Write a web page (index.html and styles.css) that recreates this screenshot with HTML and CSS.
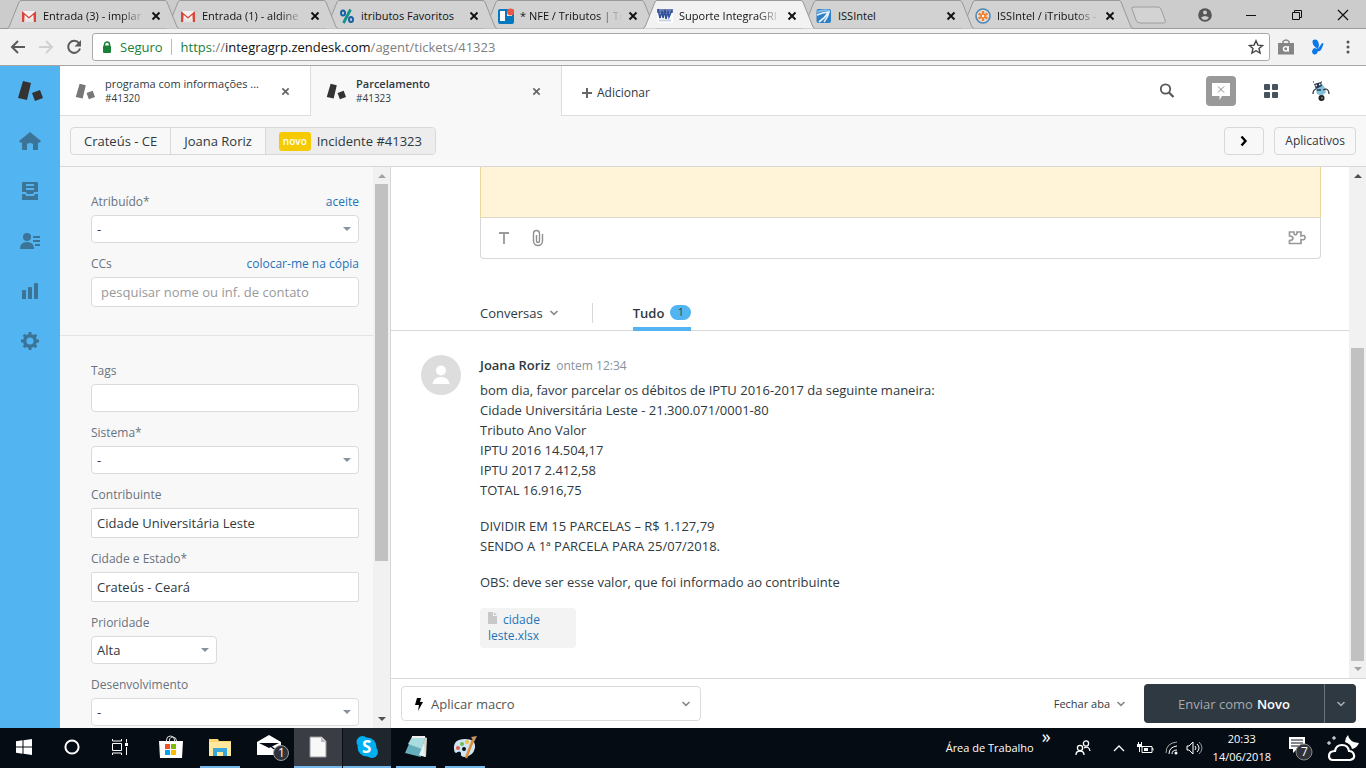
FILE: index.html
```html
<!DOCTYPE html>
<html lang="pt-BR">
<head>
<meta charset="utf-8">
<title>Suporte IntegraGRP</title>
<link rel="stylesheet" href="styles.css">
</head>
<body>
<svg class="defs" width="0" height="0" aria-hidden="true">
  <symbol id="tabshape" viewBox="0 0 172 29" preserveAspectRatio="none"><path d="M0 28.5 2 27 12 2q1-1.500 2-1.500H158q1 0 2 1.500L170 27l2 1.500"/></symbol>
  <symbol id="x" viewBox="0 0 10 10"><path d="M1.500 1.500l7 7m0-7l-7 7" fill="none" stroke="currentColor" stroke-width="1.900"/></symbol>
  <symbol id="gmail" viewBox="0 0 16 16"><path d="M1 3h14v11H1z" fill="#f2f2f2"/><path d="M1 14V3l7 6 7-6v11h-2.500V6.800L8 10.800 3.500 6.800V14z" fill="#d8443a"/><path d="M3.500 14v-4L8 12l4.500-2v4z" fill="#e3e3e3"/></symbol>
  <symbol id="ticket" viewBox="0 0 26 22"><path d="M6 1l8 2-4 17-9-2zM15 13l8-3 3 8-8 3z" fill="currentColor"/></symbol>
  <symbol id="chev" viewBox="0 0 10 6"><path d="M1.500 1l3.500 3.300L8.500 1" fill="none" stroke="currentColor" stroke-width="1.600"/></symbol>
</svg>

<header class="browser">
  <div class="strip">
    <nav class="btabs" aria-label="Abas do navegador">
      <div class="btab"><svg class="shape"><use href="#tabshape"/></svg><svg class="fav"><use href="#gmail"/></svg><span class="btitle">Entrada (3) - implar</span><button class="bclose" aria-label="Fechar"><svg width="10" height="10"><use href="#x"/></svg></button></div>
      <div class="btab"><svg class="shape"><use href="#tabshape"/></svg><svg class="fav"><use href="#gmail"/></svg><span class="btitle">Entrada (1) - aldine</span><button class="bclose" aria-label="Fechar"><svg width="10" height="10"><use href="#x"/></svg></button></div>
      <div class="btab"><svg class="shape"><use href="#tabshape"/></svg><svg class="fav" viewBox="0 0 16 16"><g fill="none" stroke-width="2"><ellipse cx="4" cy="5" rx="2" ry="2.600" stroke="#1660a8"/><ellipse cx="12" cy="11.500" rx="2" ry="2.600" stroke="#1660a8"/><path d="M11.500 1.500L4.500 15" stroke="#159188" stroke-width="2.800"/></g></svg><span class="btitle full">itributos Favoritos</span><button class="bclose" aria-label="Fechar"><svg width="10" height="10"><use href="#x"/></svg></button></div>
      <div class="btab"><svg class="shape"><use href="#tabshape"/></svg><svg class="fav" viewBox="0 0 16 16"><rect y="1" width="16" height="15" rx="2" fill="#0079bf"/><path d="M2 3h5v10H2zM9 3h5v5H9z" fill="#fff"/><circle cx="12.500" cy="4" r="3.500" fill="#eb5a46"/></svg><span class="btitle">* NFE / Tributos | Tr</span><button class="bclose" aria-label="Fechar"><svg width="10" height="10"><use href="#x"/></svg></button></div>
      <div class="btab current"><svg class="shape"><use href="#tabshape"/></svg><svg class="fav" viewBox="0 0 16 16"><path d="M0 1h16v14H0z" fill="#fff"/><path d="M0 1h16v4H0z" fill="#6f83b3"/><path d="M1 1l2 9 2-7 1 7 2-8 1 9 2-8 1 6 3-7" fill="none" stroke="#31539b" stroke-width="1.600"/><path d="M2 12.500h12" stroke="#c9d4e2" stroke-width="2"/></svg><span class="btitle">Suporte IntegraGRI</span><button class="bclose" aria-label="Fechar"><svg width="10" height="10"><use href="#x"/></svg></button></div>
      <div class="btab"><svg class="shape"><use href="#tabshape"/></svg><svg class="fav" viewBox="0 0 16 16"><rect x=".5" y="1" width="14.500" height="14" rx="2" fill="#2e7fc4"/><path d="M1 4q7-3 13-1" stroke="#83bce8" stroke-width="2" fill="none"/><path d="M1 7q5-2.500 12-3-1 5-5 10" stroke="#e9f4fc" stroke-width="1.500" fill="none"/><path d="M3 14q6-4 9-9" stroke="#e9f4fc" stroke-width="1.800" fill="none"/></svg><span class="btitle full">ISSIntel</span><button class="bclose" aria-label="Fechar"><svg width="10" height="10"><use href="#x"/></svg></button></div>
      <div class="btab"><svg class="shape"><use href="#tabshape"/></svg><svg class="fav" viewBox="0 0 16 16"><circle cx="8" cy="8" r="7" fill="#e8dfd6" stroke="#4c87b8" stroke-width="1.600"/><g stroke="#f08232" stroke-width="2.400"><path d="M8 3v10M3.500 5.500l9 5M12.500 5.500l-9 5"/></g><circle cx="8" cy="8" r="1.200" fill="#fff"/></svg><span class="btitle">ISSIntel / iTributos -</span><button class="bclose" aria-label="Fechar"><svg width="10" height="10"><use href="#x"/></svg></button></div>
    </nav>
    <button class="newtab" aria-label="Nova aba"><svg width="36" height="18"><path d="M4 1h24q2 0 3 2l4 11q1 3-1 3H10q-3 0-4-3L2 3Q1 1 4 1z" fill="#d3d3d3" stroke="#9e9e9e"/></svg></button>
    <div class="wincontrols">
      <button aria-label="Perfil"><svg width="14" height="14"><circle cx="7" cy="7" r="6.800" fill="#555"/><circle cx="7" cy="4.600" r="2" fill="#ccc"/><path d="M3 9.500q4-3 8 0-1.500 2.500-4 2.500t-4-2.500z" fill="#ccc"/></svg></button>
      <button aria-label="Minimizar"><svg width="12" height="12"><path d="M1 6.500h10" stroke="#111"/></svg></button>
      <button aria-label="Restaurar"><svg width="12" height="12"><path d="M1.500 3.500h7v7h-7zM3.500 3V1.500h7v7H9" fill="none" stroke="#111"/></svg></button>
      <button aria-label="Fechar janela"><svg width="12" height="12"><path d="M1 1l10 10m0-10L1 11" stroke="#111" stroke-width="1.200"/></svg></button>
    </div>
  </div>
  <div class="toolbar">
    <button class="tb" aria-label="Voltar"><svg width="16" height="16"><path d="M15 8H2.500M8 2L2 8l6 6" fill="none" stroke="#5b5b5b" stroke-width="2"/></svg></button>
    <button class="tb" aria-label="Avançar"><svg width="16" height="16"><path d="M1 8h12.500M8 2l6 6-6 6" fill="none" stroke="#d0d0d0" stroke-width="2"/></svg></button>
    <button class="tb" aria-label="Recarregar"><svg width="16" height="16"><path d="M13 4.200A6 6 0 1 0 14 9.500" fill="none" stroke="#5b5b5b" stroke-width="2"/><path d="M15 1v6.500H8.500z" fill="#5b5b5b"/></svg></button>
    <div class="address">
      <svg width="10" height="13"><path d="M2.500 5V3.500a2.500 2.500 0 0 1 5 0V5" fill="none" stroke="#188038" stroke-width="1.500"/><rect x="1" y="4.500" width="8" height="7.500" rx="1" fill="#188038"/></svg>
      <span class="secure">Seguro</span>
      <div class="url" role="textbox" aria-label="Endereço" contenteditable="true"><span class="scheme">https</span>://<b>integragrp.zendesk.com</b>/agent/tickets/41323</div>
      <button class="tb" aria-label="Favoritar"><svg width="16" height="16"><path d="M8 1.800l1.900 4.300 4.600.4-3.500 3 1.100 4.600L8 11.700l-4.100 2.400L5 9.500 1.500 6.500l4.600-.4z" fill="none" stroke="#444" stroke-width="1.400"/></svg></button>
    </div>
    <div class="extensions">
      <button class="tb" aria-label="Extensão de compras"><svg width="16" height="16"><path d="M0 4h16v11.500H0z" fill="#858585"/><path d="M5 5V2.500q3-3 6 0V5" fill="none" stroke="#858585" stroke-width="1.400"/><circle cx="7.700" cy="9.800" r="2.200" fill="none" stroke="#fff" stroke-width="1.400"/><path d="M10.200 7v5.800" stroke="#fff" stroke-width="1.400"/></svg></button>
      <button class="tb" aria-label="Extensão"><svg width="14" height="16"><path d="M7 10Q0 6 2 1q5-2 6 5l-1 4 4-6 1.500.500Q10 14 7 12q-1 4-4 3.500Q-1 13 3 9z" fill="#0a78e8"/></svg></button>
      <button class="tb" aria-label="Menu"><svg width="4" height="14"><g fill="#555"><circle cx="2" cy="2" r="1.500"/><circle cx="2" cy="7" r="1.500"/><circle cx="2" cy="12" r="1.500"/></g></svg></button>
    </div>
  </div>
</header>

<div class="app">
  <nav class="rail" aria-label="Principal">
    <a href="#" class="logo" aria-label="Início do suporte"><svg width="26" height="22"><use href="#ticket"/></svg></a>
    <a href="#" aria-label="Início"><svg width="22" height="18"><path d="M11 0l11 9-1 1.500h-2V18h-5v-6q-3-2-6 0v6H3v-7.500H1L0 9z" fill="currentColor"/></svg></a>
    <a href="#" aria-label="Visualizações"><svg width="16" height="18"><path d="M0 1q0-1 1-1h14q1 0 1 1v9h-4l-1 2H5l-1-2H0zM0 12h3l1 2h8l1-2h3v6H0z" fill="currentColor"/><path d="M4 3h8M4 7h8" stroke="#52b5f1" stroke-width="2"/></svg></a>
    <a href="#" aria-label="Clientes"><svg width="20" height="16"><circle cx="7" cy="4" r="4" fill="currentColor"/><path d="M0 16q0-7 7-7t7 7z" fill="currentColor"/><path d="M13 4h7M13 8h7M15 12h5" stroke="currentColor" stroke-width="2"/></svg></a>
    <a href="#" aria-label="Relatórios"><svg width="16" height="16"><path d="M0 8q0-1 1-1h2q1 0 1 1v8H0zM6 5q0-1 1-1h2q1 0 1 1v11H6zM12 1q0-1 1-1h2q1 0 1 1v15h-4z" fill="currentColor"/></svg></a>
    <a href="#" aria-label="Administrador"><svg width="18" height="18"><circle cx="9" cy="9" r="5.300" fill="none" stroke="currentColor" stroke-width="3.400"/><path d="M9 0v3M9 15v3M0 9h3M15 9h3M2.700 2.700l2 2M13.300 13.300l2 2M2.700 15.300l2-2M13.300 4.700l2-2" stroke="currentColor" stroke-width="3"/></svg></a>
  </nav>

  <div class="workspace">
    <header class="tabs">
      <div class="tab muted"><svg class="ticon" width="20" height="17"><use href="#ticket"/></svg><a href="#"><span class="name">programa com informações ...</span><span>#41320</span></a><button aria-label="Fechar ticket"><svg width="9" height="9"><use href="#x"/></svg></button></div>
      <div class="tab selected"><svg class="ticon" width="20" height="17"><use href="#ticket"/></svg><a href="#"><strong class="name">Parcelamento</strong><span>#41323</span></a><button aria-label="Fechar ticket"><svg width="9" height="9"><use href="#x"/></svg></button></div>
      <button class="add"><svg width="10" height="10"><path d="M5 0v10M0 5h10" stroke="#666" stroke-width="2"/></svg>Adicionar</button>
      <div class="tools">
        <button aria-label="Pesquisar"><svg width="16" height="16"><circle cx="6.500" cy="6" r="4.700" fill="none" stroke="#555" stroke-width="1.800"/><path d="M10 9.500l4.500 4.500" stroke="#555" stroke-width="2.200"/></svg></button>
        <button class="chat" aria-label="Chat"><svg width="18" height="18"><path d="M0 1h18v13h-8l-2.500 4V14H0z" fill="#fff"/><path d="M6 4.500l6 6m0-6l-6 6" stroke="#888"/></svg></button>
        <button aria-label="Produtos"><svg width="14" height="14"><g fill="#46525e"><rect width="6" height="6" rx="1"/><rect x="8" width="6" height="6" rx="1"/><rect y="8" width="6" height="6" rx="1"/><rect x="8" y="8" width="6" height="6" rx="1"/></g></svg></button>
        <button aria-label="Perfil do agente"><svg width="18" height="20"><path d="M3 6l7-3 3 4 1 4-4 4-5-2z" fill="#86bfdb"/><path d="M2 3l7-2 1 4-6 3z" fill="#26394a"/><path d="M5 9l4 0" stroke="#26394a" stroke-width="1.500"/><path d="M3.500 4.500h1.500M7 3.500h1.500" stroke="#fff" stroke-width="1.500"/><path d="M11 9l3-1q3 1 3 5M4 8q-3 1-3 5" fill="none" stroke="#333" stroke-width="1.300"/><path d="M1 1h1M9 1h1" stroke="#d2713a" stroke-width="2"/><circle cx="9.500" cy="17" r="3" fill="#222"/><circle cx="10" cy="17" r="1" fill="#888"/></svg></button>
      </div>
    </header>

    <div class="subheader">
      <nav class="crumbs" aria-label="Navegação"><a href="#">Crateús - CE</a><a href="#">Joana Roriz</a><a href="#" class="here"><span class="badge">novo</span>Incidente #41323</a></nav>
      <div class="subactions">
        <button class="outline next" aria-label="Próximo ticket"><svg width="8" height="12"><path d="M1.500 1.500L5.500 6l-4 4.500" fill="none" stroke="#000" stroke-width="2.400"/></svg></button>
        <button class="outline apps">Aplicativos</button>
      </div>
    </div>

    <div class="content">
      <aside class="side">
        <form class="fields">
          <section class="group">
            <div class="field"><div class="labelrow"><label for="assignee">Atribuído*</label><a href="#">aceite</a></div><div class="pick"><select id="assignee"><option>-</option></select><i></i></div></div>
            <div class="field"><div class="labelrow"><label for="cc">CCs</label><a href="#">colocar-me na cópia</a></div><input id="cc" class="tall soft" type="text" placeholder="pesquisar nome ou inf. de contato"></div>
          </section>
          <section class="group">
            <div class="field"><div class="labelrow"><label for="tags">Tags</label></div><input id="tags" type="text"></div>
            <div class="field"><div class="labelrow"><label for="system">Sistema*</label></div><div class="pick"><select id="system"><option>-</option></select><i></i></div></div>
            <div class="field"><div class="labelrow"><label for="payer">Contribuinte</label></div><input id="payer" class="tall" type="text" value="Cidade Universitária Leste"></div>
            <div class="field"><div class="labelrow"><label for="city">Cidade e Estado*</label></div><input id="city" class="tall" type="text" value="Crateús - Ceará"></div>
            <div class="field"><div class="labelrow"><label for="priority">Prioridade</label></div><div class="pick short"><select id="priority"><option>Alta</option></select><i></i></div></div>
            <div class="field"><div class="labelrow"><label for="dev">Desenvolvimento</label></div><div class="pick"><select id="dev"><option>-</option></select><i></i></div></div>
          </section>
        </form>
        <div class="bar sidebar-bar"><i class="up dim"></i><div class="thumb"></div><i class="down"></i></div>
      </aside>

      <main class="main">
        <div class="scroller">
          <div class="thread">
            <div class="composer">
              <textarea class="note" aria-label="Nota interna"></textarea>
              <div class="tools-row">
                <button aria-label="Formatação"><svg width="12" height="14"><path d="M1 2h10M6 2v11" stroke="#999" stroke-width="1.800"/></svg></button>
                <button aria-label="Anexar"><svg width="12" height="18"><path d="M4.500 6v6a1.500 1.500 0 0 0 3 0V4.500a2.800 2.800 0 0 0-6 0V12a4.500 4.500 0 0 0 9 0V5" fill="none" stroke="#8f8f8f" stroke-width="1.400"/></svg></button>
                <button class="puzzle" aria-label="Aplicativos"><svg width="18" height="16"><path d="M1.500 2H6v1.500q1 3 3 0V2h4v4q4-1.500 4 1.500t-4 2v4H1.500v-3q3.500 0 3.500-2.200T1.500 6z" fill="none" stroke="#999" stroke-width="1.700"/></svg></button>
              </div>
            </div>
            <nav class="filters" aria-label="Conversas">
              <button class="filter">Conversas<svg width="10" height="6"><use href="#chev"/></svg></button>
              <button class="filter all">Tudo<span class="count">1</span></button>
            </nav>
            <article class="comment">
              <svg class="avatar" width="40" height="40"><circle cx="20" cy="20" r="20" fill="#ddd"/><circle cx="20" cy="15.500" r="5" fill="#fff"/><path d="M11.500 29q1-7 8.500-7t8.500 7z" fill="#fff"/></svg>
              <div class="text">
                <div class="who"><strong>Joana Roriz</strong><time>ontem 12:34</time></div>
                <p>bom dia, favor parcelar os débitos de IPTU 2016-2017 da seguinte maneira:<br>Cidade Universitária Leste - 21.300.071/0001-80<br>Tributo Ano Valor<br>IPTU 2016 14.504,17<br>IPTU 2017 2.412,58<br>TOTAL 16.916,75</p>
                <p>DIVIDIR EM 15 PARCELAS – R$ 1.127,79<br>SENDO A 1ª PARCELA PARA 25/07/2018.</p>
                <p>OBS: deve ser esse valor, que foi informado ao contribuinte</p>
                <a href="#" class="file"><svg width="9" height="12"><path d="M0 0h5v4h4v8H0zM6 0l3 3H6z" fill="#c8c8c8"/></svg>cidade leste.xlsx</a>
              </div>
            </article>
          </div>
          <div class="bar main-bar"><i class="up"></i><div class="thumb"></div><i class="down dim"></i></div>
        </div>
        <footer class="footer">
          <button class="macro"><svg width="8" height="14"><path d="M2 1h4L5 5h3L3 14l1-6H0z" fill="#000"/></svg><span>Aplicar macro</span><svg class="end" width="10" height="6"><use href="#chev"/></svg></button>
          <button class="closetab">Fechar aba<svg width="10" height="6"><use href="#chev"/></svg></button>
          <div class="submit"><button class="send">Enviar como <strong>Novo</strong></button><button class="more" aria-label="Mais opções"><svg width="10" height="6"><use href="#chev"/></svg></button></div>
        </footer>
      </main>
    </div>
  </div>
</div>

<footer class="taskbar">
  <button aria-label="Iniciar"><svg width="16" height="16"><path d="M0 2.300L6.500 1.300V7.500H0zM7.500 1.200L16 0v7.500H7.500zM0 8.500h6.500v6.200L0 13.700zM7.500 8.500H16V16l-8.500-1.200z" fill="#fff"/></svg></button>
  <button aria-label="Cortana"><svg width="16" height="16"><circle cx="8" cy="8" r="6.600" fill="none" stroke="#fff" stroke-width="2"/></svg></button>
  <button aria-label="Visão de tarefas"><svg width="18" height="16"><path d="M1.500 4.500h9v7h-9zM1.500 0v2h9V0M1.500 16v-2h9v2M15.500 0v3.500M15.500 8v8" fill="none" stroke="#fff"/><path d="M14 4h3v3h-3z" fill="#fff"/></svg></button>
  <button class="store" aria-label="Microsoft Store"><svg width="24" height="24"><path d="M0 6h24l-1 17H1z" fill="#fff"/><path d="M7.500 7V5q0-4 4-4t4 4v2M10.500 7V4q1-2 3-2 4 0 4 4" fill="none" stroke="#ddd"/><path d="M6 9h5v5H6z" fill="#f25022"/><path d="M12 9h5v5h-5z" fill="#7fba00"/><path d="M6 15h5v5H6z" fill="#00a4ef"/><path d="M12 15h5v5h-5z" fill="#ffb900"/></svg></button>
  <button class="running" aria-label="Explorador"><svg width="22" height="19"><path d="M0 1h9l1 2h12v15H0z" fill="#f8d775"/><path d="M0 4h22v14H0z" fill="#ffe79b"/><path d="M4 18v-8h14v8h-4v-4H8v4z" fill="#3aa5dc"/></svg></button>
  <button class="mail" aria-label="Email"><svg width="36" height="28"><path d="M2 9l12-7 12 7v13H2z" fill="#fff"/><path d="M4 10h20l-10 5z" fill="#070c14"/><path d="M14 12l12 9" stroke="#070c14" stroke-width="1.500"/><circle cx="26" cy="20" r="7.500" fill="#30343a" stroke="#999"/><text x="23" y="24" font-size="12" fill="#fff">1</text></svg></button>
  <button class="running focused" aria-label="Documento"><svg width="18" height="22"><path d="M1 1h12l4 4v16H1z" fill="#f8f8f8" stroke="#999"/><path d="M12 1v5h5z" fill="#bbb"/></svg></button>
  <button class="running lit" aria-label="Skype"><svg width="22" height="22"><circle cx="11" cy="11" r="9.500" fill="#00aff0"/><circle cx="6.500" cy="6" r="6" fill="#00aff0"/><circle cx="16" cy="16" r="6" fill="#00aff0"/><text x="6" y="17" font-size="17" font-weight="bold" fill="#fff">S</text></svg></button>
  <button class="running" aria-label="Bloco de notas"><svg width="24" height="24"><path d="M20 2l3 1-1 19-7-3z" fill="#d8d4c6"/><path d="M8 2h13l-4 20-16-4z" fill="#64aebb"/><path d="M8 2h13l-3 12-14-5z" fill="#a9dce1"/><path d="M8 2h13" stroke="#eee" stroke-width="2"/><path d="M20 8l1 14-6-2z" fill="#e8f2f2"/></svg></button>
  <button class="running" aria-label="Paint"><svg width="26" height="24"><path d="M2 14Q1 4 13 4q11 0 10 9-2 8-10 9-5 0-4-4-1-3-5 0-2-1-2-4z" fill="#cfe5f4"/><circle cx="6" cy="13" r="2" fill="#e35c50"/><circle cx="10" cy="9" r="2" fill="#6dbb55"/><circle cx="15" cy="7" r="2" fill="#f4c13b"/><circle cx="12" cy="14" r="2" fill="#08101a"/><path d="M21 5l-7 18" stroke="#e08a33" stroke-width="2.500"/><path d="M19 2l6-1-3 6z" fill="#c89567"/></svg></button>
  <div class="tray">
    <span class="desk">Área de Trabalho</span><span class="dbl">»</span>
    <svg class="people" width="16" height="16"><g fill="none" stroke="#fff" stroke-width="1.300"><circle cx="5" cy="8" r="2.600"/><path d="M1 15q0-4 4-4t4 4"/><circle cx="11" cy="3.500" r="2.600"/><path d="M9 8q5-2.500 6 3"/></g></svg>
    <svg class="caret" width="12" height="8"><path d="M1 7l5-5 5 5" fill="none" stroke="#fff" stroke-width="1.300"/></svg>
    <svg class="battery" width="17" height="13"><path d="M5 4.500h10v6H5zM15 6.500h1v2" fill="none" stroke="#fff"/><path d="M7 6h4v3H7zM0 2h5v3H3v5H2V5H0zM1 0h1v2H1zM4 0h1v2H4z" fill="#fff"/></svg>
    <svg class="wifi" width="13" height="14"><g fill="none" stroke="#aaa"><path d="M1 12Q1 2 12 1"/><path d="M4 13q0-7 8-8" stroke="#fff"/><path d="M7 13q0-4 5-4" stroke="#fff"/></g><circle cx="11" cy="12" r="1.500" fill="#fff"/></svg>
    <svg class="volume" width="17" height="14"><path d="M1 5h2l4-4v12L3 9H1z" fill="none" stroke="#fff"/><path d="M9 5q2 2 0 4M11 3q4 4 0 8" fill="none" stroke="#fff"/><path d="M13 1q6 6 0 12" fill="none" stroke="#999"/></svg>
    <time class="clock">20:33<br>14/06/2018</time>
    <svg class="notice" width="26" height="26"><path d="M1 2h16v12H9l-4 4v-4H1z" fill="#fff"/><path d="M3 5h12M3 8h12M3 11h8" stroke="#0b1119"/><circle cx="16" cy="17" r="8" fill="#30343a" stroke="#888"/><text x="13" y="21" font-size="12" fill="#fff">7</text></svg>
    <svg class="weather" width="34" height="30"><path d="M7 27h17q5-1 4-5-1-4-5-4-1-6-7-6t-7 6q-6 0-6 5 0 4 4 4z" fill="none" stroke="#fff" stroke-width="2.200"/><path d="M22 2q1 7 11 8-2 5-7 6-1-5-7-7 0-4 3-7z" fill="#fff"/><path d="M8 3v4M6 5h4M3 8v4M1 10h4" stroke="#fff"/></svg>
  </div>
</footer>
</body>
</html>
```
FILE: styles.css
```css
* { box-sizing: border-box; }
html, body { height: 100%; }
body {
  margin: 0;
  display: flex;
  flex-direction: column;
  overflow: hidden;
  font: 13px/20px "Open Sans", "Noto Sans", sans-serif;
  color: #2f3941;
}
button, input, select, textarea { font: inherit; color: inherit; margin: 0; }
button { background: none; border: 0; padding: 0; display: inline-flex; align-items: center; justify-content: center; }
a { color: inherit; text-decoration: none; }
svg { flex: none; display: block; }
.defs { position: absolute; }

/* Browser frame */
.browser { flex: none; background: #f2f2f2; border-bottom: 1px solid #a6a6a6; color: #111; }
.strip { display: flex; height: 29px; background: #ccc; box-shadow: inset 0 -1px #9a9a9a; padding-left: 7px; }
.btabs { display: flex; flex: 0 1 1128px; min-width: 0; }
.btab { position: relative; isolation: isolate; flex: 0 1 172px; min-width: 0; display: flex; align-items: center; gap: 6px; padding: 2px 18px 0 14px; margin-right: -13px; font-size: 11px; }
.btab:nth-child(1) { z-index: 7; }
.btab:nth-child(2) { z-index: 6; }
.btab:nth-child(3) { z-index: 5; }
.btab:nth-child(4) { z-index: 4; }
.btab:nth-child(5) { z-index: 9; }
.btab:nth-child(6) { z-index: 2; }
.shape { position: absolute; inset: 0; width: 100%; height: 100%; fill: #d2d2d2; stroke: #999; z-index: -1; }
.current .shape { fill: #f2f2f2; }
.fav { width: 16px; height: 16px; }
.btitle { flex: 1; min-width: 0; overflow: hidden; white-space: nowrap; mask-image: linear-gradient(90deg, #000 76%, transparent); }
.btitle.full { mask-image: none; }
.newtab { margin-left: -5px; }
.wincontrols { margin-left: auto; display: flex; }
.wincontrols button { width: 46px; }
.toolbar { display: flex; align-items: center; height: 36px; padding-left: 10px; }
.tb { width: 16px; height: 16px; margin-right: 12px; flex: none; }
.address { flex: 1; min-width: 0; display: flex; align-items: center; height: 28px; margin-left: -2px; padding-left: 9px; background: #fff; border: 1px solid #aaa; border-radius: 3px; }
.address .tb { margin-right: 5px; }
.secure { margin-left: 8px; padding-right: 8px; font-size: 13px; line-height: 16px; color: #188038; border-right: 1px solid #bbb; }
.url { flex: 1; min-width: 0; padding-left: 9px; font-size: 13px; color: #808080; white-space: nowrap; outline: 0; }
.url b { font-weight: 400; color: #111; }
.scheme { color: #188038; }
.extensions { display: flex; gap: 16px; padding: 0 16px 0 8px; }
.extensions .tb { margin: 0; }
.extensions .tb:last-child { width: 4px; margin-left: 4px; }

/* Application shell */
.app { flex: 1; min-height: 0; display: flex; }
.rail { flex: none; width: 60px; background: #52b5f1; color: #3b7497; display: flex; flex-direction: column; }
.rail a { height: 50px; display: flex; align-items: center; justify-content: center; }
.rail .logo { color: #333; }
.workspace { flex: 1; min-width: 0; display: flex; flex-direction: column; background: #f8f8f8; }
.tabs { flex: none; display: flex; height: 50px; background: #fff; box-shadow: inset 0 -1px #ddd; }
.tab { flex: 0 1 251px; min-width: 0; display: flex; align-items: center; padding: 0 20px 0 15px; border-right: 1px solid #ddd; font-size: 10px; line-height: 14px; }
.tab a { flex: 1; min-width: 0; margin-left: 10px; display: flex; flex-direction: column; }
.tab .name { white-space: nowrap; font-size: 11px; }
.tab strong { font-weight: 600; }
.tab button { color: #666; }
.ticon { color: #333; }
.muted .ticon { color: #777; }
.selected { background: #f8f8f8; }
.add { gap: 5px; padding: 3px 0 0 20px; font-size: 12px; }
.tools { margin-left: auto; display: flex; align-items: center; padding-right: 30px; }
.tools button { width: 30px; height: 30px; margin-left: 20px; }
.tools .chat { background: #999; border-radius: 4px; margin-left: 24px; }

.subheader { flex: none; height: 51px; padding: 0 10px; display: flex; align-items: center; justify-content: space-between; border-bottom: 1px solid #d8d8d8; }
.crumbs { display: flex; border: 1px solid #d8d8d8; border-radius: 4px; overflow: hidden; }
.crumbs a { display: flex; align-items: center; height: 26px; padding: 0 13px; border-right: 1px solid #d8d8d8; }
.crumbs .here { background: #ededed; border-right: 0; }
.badge { background: #f5ca00; color: #fff; font-size: 10px; font-weight: 600; line-height: 19px; padding: 0 4px; border-radius: 3px; margin-right: 6px; }
.subactions { display: flex; gap: 10px; }
.outline { height: 28px; border: 1px solid #d8d8d8; border-radius: 4px; font-size: 12px; }
.next { width: 40px; }
.apps { padding: 0 10px; }

.content { flex: 1; min-height: 0; display: flex; }
.side { flex: none; width: 331px; display: flex; overflow: hidden; border-right: 1px solid #d8d8d8; }
.fields { flex: 1; min-width: 0; overflow: hidden; }
.group { display: flex; flex-direction: column; gap: 11px; padding: 25px 14px 28px 31px; border-bottom: 1px solid #e4e4e4; }
.field { display: flex; flex-direction: column; gap: 3px; }
.labelrow { display: flex; justify-content: space-between; font-size: 12px; color: #68737d; }
.labelrow a { color: #1f73b7; }
.field input, .field select { width: 100%; height: 28px; padding: 0 5px; background: #fff; border: 1px solid #d8dcde; border-radius: 4px; outline: 0; }
.field .tall { height: 30px; border-radius: 2px; }
.field .soft { padding-left: 9px; border-radius: 4px; }
.field input::placeholder { color: #999; }
.field select { appearance: none; }
.pick { display: grid; align-items: center; }
.pick > * { grid-area: 1 / 1; }
.pick i { justify-self: end; margin-right: 8px; border: 4px solid transparent; border-top-color: #87929d; border-bottom: 0; pointer-events: none; }
.short { width: 126px; }

.bar { flex: none; width: 17px; background: #f1f1f1; display: flex; flex-direction: column; align-items: center; padding: 7px 0; }
.bar i { flex: none; border: 4px solid transparent; }
.up { margin-bottom: 6px; }
.bar .up { border-top: 0; border-bottom-color: #505050; }
.bar .down { border-bottom: 0; border-top-color: #505050; margin-top: auto; }
.bar .up.dim { border-bottom-color: #a3a3a3; }
.bar .down.dim { border-top-color: #a3a3a3; }
.thumb { width: 13px; background: #c1c1c1; }
.sidebar-bar .thumb { height: 69%; }
.main-bar .thumb { height: 63%; margin-top: auto; }
.bar.main-bar .down { margin-top: 6px; }

.main { flex: 1; min-width: 0; display: flex; flex-direction: column; background: #fff; }
.scroller { flex: 1; min-height: 0; display: flex; }
.thread { flex: 1; min-width: 0; overflow: hidden; }
.composer { margin: 0 28px 0 89px; display: flex; flex-direction: column; }
.note { display: block; width: 100%; height: 51px; resize: none; outline: 0; background: #fff4d7; border: 1px solid #ecd79a; border-top: 0; border-bottom-color: #dcd9c8; }
.tools-row { display: flex; align-items: center; gap: 22px; height: 41px; padding: 0 14px 0 17px; border: 1px solid #d8d8d8; border-top: 0; border-radius: 0 0 4px 4px; }
.puzzle { margin-left: auto; }
.filters { display: flex; align-items: stretch; margin-top: 37px; height: 35px; padding-left: 89px; box-shadow: inset 0 -1px #d8d8d8; }
.filter { gap: 6px; font-size: 13px; padding-bottom: 1px; }
.filter svg, .closetab svg, .end { color: #888; }
.filters::before { content: ""; order: 1; width: 1px; height: 20px; margin: 7px 40px 0 33px; background: #d8d8d8; }
.all { order: 2; font-weight: 600; border-bottom: 4px solid #52b5f1; padding: 2px 0 0; }
.count { background: #52b5f1; border-radius: 8px; width: 21px; font-size: 10px; line-height: 15px; font-weight: 400; }
.comment { display: flex; gap: 19px; padding: 24px 28px 0 30px; }
.text { flex: 1; min-width: 0; }
.who { margin-bottom: 4px; }
.who strong { font-weight: 600; }
.who time { margin-left: 6px; font-size: 12px; color: #87929d; }
.text p { margin: 0 0 16px; }
.file { display: block; width: 96px; padding: 4px 8px; border-radius: 4px; background: #f3f3f3; color: #1f73b7; font-size: 12px; line-height: 16px; }
.file svg { display: inline-block; margin-right: 6px; }

.footer { flex: none; display: flex; align-items: center; height: 50px; padding: 0 10px; border-top: 1px solid #d8d8d8; }
.macro { width: 300px; height: 35px; padding: 0 9px 0 13px; gap: 8px; border: 1px solid #d8dcde; border-radius: 4px; color: #555; }
.end { margin-left: auto; }
.closetab { margin-left: auto; gap: 6px; font-size: 11px; font-weight: 500; }
.submit { display: flex; height: 39px; margin-left: 18px; background: #2f3941; border-radius: 4px; color: #a5aaae; }
.send { width: 180px; gap: 4px; }
.send strong { color: #fff; font-weight: 600; }
.more { width: 32px; border-left: 1px solid #68737d; }

/* Windows taskbar */
.taskbar { flex: none; display: flex; height: 40px; background: #060c14; color: #fff; }
.taskbar button { width: 48px; border-bottom: 2px solid transparent; color: #fff; flex: none; }
.taskbar .store { width: 49px; margin-left: 2px; }
.taskbar .mail { width: 50px; padding-left: 8px; }
.taskbar .running { width: 40px; margin: 0 4px 0 5px; border-bottom-color: #76b9ed; }
.taskbar .focused { width: 48px; margin: 0 1px 0 0; background: #3a3e44; }
.taskbar .lit { width: 48px; margin: 0; background: #1f262e; }
.tray { margin-left: auto; display: flex; align-items: center; font-size: 12px; line-height: 18px; white-space: nowrap; padding-right: 6px; }
.desk { font-size: 11px; }
.dbl { font-size: 18px; margin: 0 24px 24px 8px; }
.people { margin-right: 22px; }
.caret { margin-right: 12px; }
.battery { margin-right: 11px; }
.wifi { margin-right: 8px; }
.volume { margin-right: 10px; }
.clock { text-align: center; font-size: 11px; }
.notice { margin-left: 17px; }
.weather { margin-left: 12px; }
```
